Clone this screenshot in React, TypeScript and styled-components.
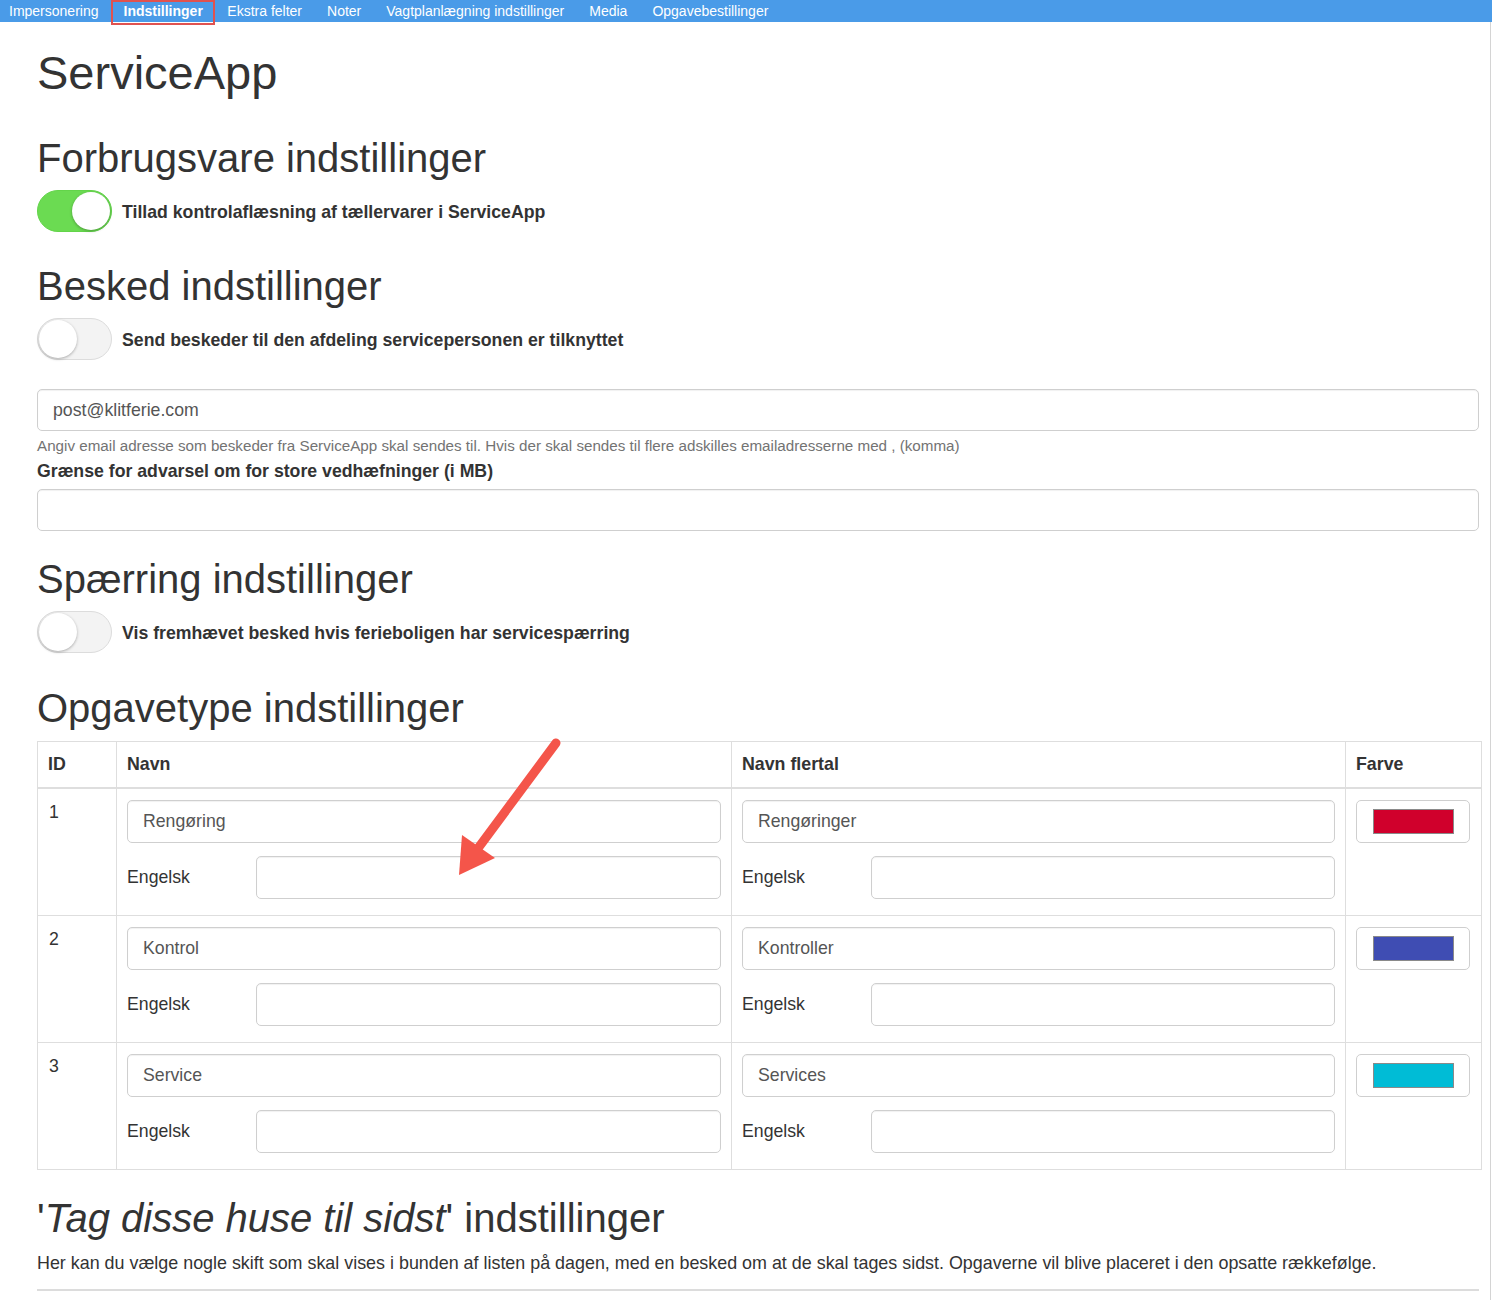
import * as React from 'react';
import styled, {createGlobalStyle} from 'styled-components';

const GlobalStyle = createGlobalStyle`
  body {
    margin: 0;
    background: #fff;
    font-family: "Liberation Sans", Arial, sans-serif;
    color: #333;
  }
`;

const navItems = [
  'Impersonering',
  'Indstillinger',
  'Ekstra felter',
  'Noter',
  'Vagtplanlægning indstillinger',
  'Media',
  'Opgavebestillinger',
];

const taskTypes = [
  {id: 1, name: 'Rengøring', plural: 'Rengøringer', color: '#d0002c'},
  {id: 2, name: 'Kontrol', plural: 'Kontroller', color: '#3f4db3'},
  {id: 3, name: 'Service', plural: 'Services', color: '#00bcd6'},
];

const Toggle: React.FC<{on?: boolean}> = ({on}) => (
  <Track on={on}>
    <Knob />
  </Track>
);

const NameCell: React.FC<{value: string}> = ({value}) => (
  <Td>
    <Input defaultValue={value} />
    <EnglishRow>
      <span>Engelsk</span>
      <Input defaultValue="" />
    </EnglishRow>
  </Td>
);

export default function App() {
  return (
    <>
      <GlobalStyle />
      <Nav>
        {navItems.map(item => (
          <NavItem key={item} active={item === 'Indstillinger'}>{item}</NavItem>
        ))}
      </Nav>
      <Page>
        <Title>ServiceApp</Title>

        <Heading space={37}>Forbrugsvare indstillinger</Heading>
        <SwitchRow>
          <Toggle on />
          <SwitchLabel>Tillad kontrolaflæsning af tællervarer i ServiceApp</SwitchLabel>
        </SwitchRow>

        <Heading space={32}>Besked indstillinger</Heading>
        <SwitchRow>
          <Toggle />
          <SwitchLabel>Send beskeder til den afdeling servicepersonen er tilknyttet</SwitchLabel>
        </SwitchRow>
        <FieldInput defaultValue="post@klitferie.com" />
        <HelpText>
          Angiv email adresse som beskeder fra ServiceApp skal sendes til. Hvis der skal sendes til flere adskilles emailadresserne med , (komma)
        </HelpText>
        <FieldLabel>Grænse for advarsel om for store vedhæfninger (i MB)</FieldLabel>
        <FieldInput defaultValue="" />

        <Heading space={26}>Spærring indstillinger</Heading>
        <SwitchRow>
          <Toggle />
          <SwitchLabel>Vis fremhævet besked hvis ferieboligen har servicespærring</SwitchLabel>
        </SwitchRow>

        <Heading space={33}>Opgavetype indstillinger</Heading>
        <TableWrap>
          <Table>
            <colgroup>
              <col style={{width: 79}} />
              <col style={{width: 615}} />
              <col style={{width: 614}} />
              <col style={{width: 136}} />
            </colgroup>
            <thead>
              <tr>
                <Th>ID</Th>
                <Th>Navn</Th>
                <Th>Navn flertal</Th>
                <Th>Farve</Th>
              </tr>
            </thead>
            <tbody>
              {taskTypes.map(t => (
                <tr key={t.id}>
                  <IdCell>{t.id}</IdCell>
                  <NameCell value={t.name} />
                  <NameCell value={t.plural} />
                  <Td>
                    <ColorBox>
                      <Swatch color={t.color} />
                    </ColorBox>
                  </Td>
                </tr>
              ))}
            </tbody>
          </Table>
          <Arrow width="140" height="150" viewBox="0 0 140 150">
            <line x1="136" y1="4" x2="56" y2="112" stroke="#f4554a" strokeWidth="9" strokeLinecap="round" />
            <polygon points="39,136 42,96 75,119" fill="#f4554a" />
          </Arrow>
        </TableWrap>

        <Heading space={26}>
          '<em>Tag disse huse til sidst</em>' indstillinger
        </Heading>
        <Paragraph>
          Her kan du vælge nogle skift som skal vises i bunden af listen på dagen, med en besked om at de skal tages sidst. Opgaverne vil blive placeret i den opsatte rækkefølge.
        </Paragraph>
        <Rule />
      </Page>
    </>
  );
}

const Nav = styled.div`
  height: 22px;
  background: #4a9be8;
  display: flex;
  align-items: flex-start;
`;

const NavItem = styled.div<{active?: boolean}>`
  box-sizing: border-box;
  font-size: 14px;
  color: #fff;
  white-space: nowrap;
  font-weight: ${p => p.active ? 'bold' : 'normal'};
  height: ${p => p.active ? '25px' : '22px'};
  border: ${p => p.active ? '2px solid #e0524f' : 'none'};
  line-height: ${p => p.active ? '19px' : '22px'};
  padding: ${p => p.active ? '0 10px 0 10.5px' : '0 12.5px'};
  &:first-child {
    padding-left: 9px;
  }
`;

const Page = styled.div`
  display: flow-root;
  padding: 0 11px 24px 37px;
  width: 1491px;
  box-sizing: border-box;
  border-right: 1px solid #d4d4d4;
  min-height: 1278px;
`;

const Title = styled.h1`
  margin: 25px 0 0;
  font-size: 47px;
  line-height: 52px;
  font-weight: normal;
  color: #333;
`;

const Heading = styled.h2<{space: number}>`
  margin: ${p => p.space}px 0 0;
  font-size: 40px;
  line-height: 44px;
  font-weight: normal;
  color: #333;
  em {
    font-style: italic;
  }
`;

const SwitchRow = styled.div`
  display: flex;
  align-items: center;
  gap: 10px;
  margin-top: 10px;
`;

const Track = styled.div<{on?: boolean}>`
  width: 75px;
  height: 42px;
  box-sizing: border-box;
  border-radius: 21px;
  background: ${p => p.on ? '#6bdb52' : '#f3f3f3'};
  border: 1px solid ${p => p.on ? '#63d44a' : '#dcdcdc'};
  display: flex;
  align-items: center;
  justify-content: ${p => p.on ? 'flex-end' : 'flex-start'};
  padding: 0 1px;
`;

const Knob = styled.div`
  width: 38px;
  height: 38px;
  border-radius: 50%;
  background: #fff;
  box-shadow: 0 1px 3px rgba(0, 0, 0, 0.3);
`;

const SwitchLabel = styled.span`
  font-size: 17.7px;
  font-weight: bold;
  color: #333;
  margin-top: 2px;
`;

const inputBase = `
  display: block;
  box-sizing: border-box;
  width: 100%;
  height: 43px;
  border: 1px solid #cfcfcf;
  border-radius: 5px;
  box-shadow: inset 0 1px 1px rgba(0, 0, 0, 0.06);
  padding: 0 15px;
  font-family: "Liberation Sans", Arial, sans-serif;
  font-size: 17.7px;
  color: #555;
  background: #fff;
  outline: none;
`;

const FieldInput = styled.input`
  ${inputBase}
  height: 42px;
  margin-top: 29px;
`;

const HelpText = styled.div`
  margin-top: 6px;
  font-size: 15.2px;
  line-height: 18px;
  color: #737373;
`;

const FieldLabel = styled.div`
  margin-top: 5px;
  margin-bottom: 7px;
  font-size: 17.7px;
  font-weight: bold;
  line-height: 22px;
  & + input {
    margin-top: 0;
  }
`;

const TableWrap = styled.div`
  position: relative;
  margin-top: 11px;
`;

const Table = styled.table`
  width: 100%;
  border-collapse: collapse;
  table-layout: fixed;
  border: 1px solid #dedede;
`;

const Th = styled.th`
  text-align: left;
  font-size: 17.8px;
  font-weight: bold;
  height: 45px;
  padding: 0 10px;
  border: 1px solid #dedede;
  border-bottom: 2px solid #dedede;
  color: #333;
`;

const Td = styled.td`
  vertical-align: top;
  padding: 11px 10px 16px;
  border: 1px solid #dedede;
  font-size: 17.7px;
`;

const IdCell = styled(Td)`
  padding-left: 11px;
  padding-top: 13px;
`;

const Input = styled.input`
  ${inputBase}
`;

const EnglishRow = styled.div`
  display: grid;
  grid-template-columns: 129px 1fr;
  align-items: center;
  margin-top: 13px;
  color: #333;
`;

const ColorBox = styled.div`
  box-sizing: border-box;
  width: 114px;
  height: 43px;
  border: 1px solid #cfcfcf;
  border-radius: 5px;
  display: flex;
  align-items: center;
  justify-content: center;
`;

const Swatch = styled.div<{color: string}>`
  width: 81px;
  height: 25px;
  background: ${p => p.color};
  border: 1px solid #8a8a8a;
  box-sizing: border-box;
`;

const Arrow = styled.svg`
  position: absolute;
  left: 383px;
  top: -2px;
  overflow: visible;
`;

const Paragraph = styled.p`
  margin: 11px 0 0;
  font-size: 17.9px;
  line-height: 24px;
  color: #333;
`;

const Rule = styled.hr`
  margin: 14px 0 0;
  border: 0;
  border-top: 2px solid #dcdcdc;
`;
